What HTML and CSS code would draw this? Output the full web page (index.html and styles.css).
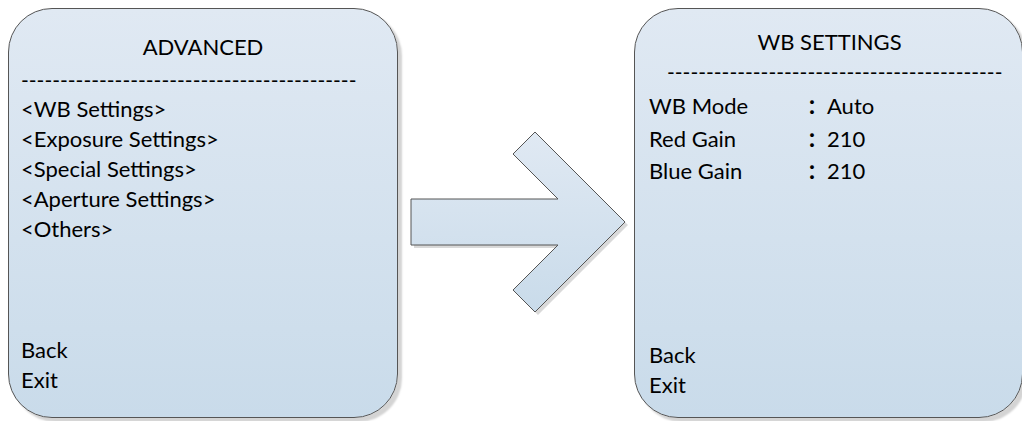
FILE: index.html
```html
<!DOCTYPE html>
<html>
<head>
    <meta charset="UTF-8">
    <title>Advanced / WB Settings menu</title>
    <link rel="stylesheet" href="styles.css">
</head>
<body>
    <div class="stage">
        <!-- left screen: advanced menu -->
        <div class="panel panel-left">
            <div class="title">ADVANCED</div>
            <div class="rule">-------------------------------------------</div>
            <div class="items">
                <div>&lt;WB Settings&gt;</div>
                <div>&lt;Exposure Settings&gt;</div>
                <div>&lt;Special Settings&gt;</div>
                <div>&lt;Aperture Settings&gt;</div>
                <div>&lt;Others&gt;</div>
            </div>
            <div class="foot">
                <div>Back</div>
                <div>Exit</div>
            </div>
        </div>

        <!-- arrow between the two screens -->
        <svg class="arrow" width="236" height="410" viewBox="0 0 236 410">
            <defs>
                <linearGradient id="fill" x1="0" y1="0" x2="0" y2="1">
                    <stop offset="0" stop-color="#e0e9f3"/>
                    <stop offset="1" stop-color="#c9dbea"/>
                </linearGradient>
            </defs>
            <polygon points="16,194 163,194 118,149 140,127 230,217 140,307 118,285 163,240 16,240" fill="#cfcfcf" opacity="0.8"/>
            <polygon points="13,191 160,191 115,146 137,124 227,214 137,304 115,282 160,237 13,237" fill="url(#fill)" stroke="#555" stroke-width="1"/>
        </svg>

        <!-- right screen: wb settings -->
        <div class="panel panel-right">
            <div class="title">WB SETTINGS</div>
            <div class="rule">-------------------------------------------</div>
            <div class="rows">
                <div class="label">WB Mode</div><div class="colon">：</div><div>Auto</div>
                <div class="label">Red Gain</div><div class="colon">：</div><div>210</div>
                <div class="label">Blue Gain</div><div class="colon">：</div><div>210</div>
            </div>
            <div class="foot">
                <div>Back</div>
                <div>Exit</div>
            </div>
        </div>
    </div>
</body>
</html>
```

FILE: styles.css
```css
html, body {
    margin: 0;
    height: 100%;
    overflow: hidden;
    background: #fff;
}

.stage {
    /* two screens side by side, arrow in the middle */
    display: flex;
    align-items: flex-start;
    padding: 8px 0 0 8px;
    font-family: "Lato", "Liberation Sans", "Noto Sans CJK SC", sans-serif;
    font-size: 22px;
    color: #000;
}

.panel {
    flex-shrink: 0;
    box-sizing: border-box;
    height: 410px;
    border: 1px solid #555;
    border-radius: 44px;
    background: linear-gradient(#e0e9f3, #c9dbea);
    box-shadow: 4px 4px 2px #d4d4d4;
    display: flex;
    flex-direction: column;
    line-height: 30px;
}

.panel-left {
    width: 390px;
    padding: 23px 12px 22px 12px;
}

.panel-right {
    width: 389px;
    padding: 18px 12px 17px 14px;
}

.arrow {
    flex-shrink: 0;
    display: block;
}

.title {
    text-align: center;
}

.rule {
    /* dashed divider typed as hyphens */
    font-size: 21px;
    white-space: nowrap;
}

.panel-left .rule {
    margin-top: 3px;
}

.panel-right .rule {
    padding-left: 18px;
}

.items {
    margin-top: -1px;
}

.rows {
    display: grid;
    grid-template-columns: 158px 20px auto;
    justify-content: start;
    line-height: 32.5px;
    margin-top: 3px;
}

.colon {
    font-family: "Noto Sans CJK SC", sans-serif;
    font-weight: bold;
    font-size: 20px;
}

.foot {
    margin-top: auto;
}
```
